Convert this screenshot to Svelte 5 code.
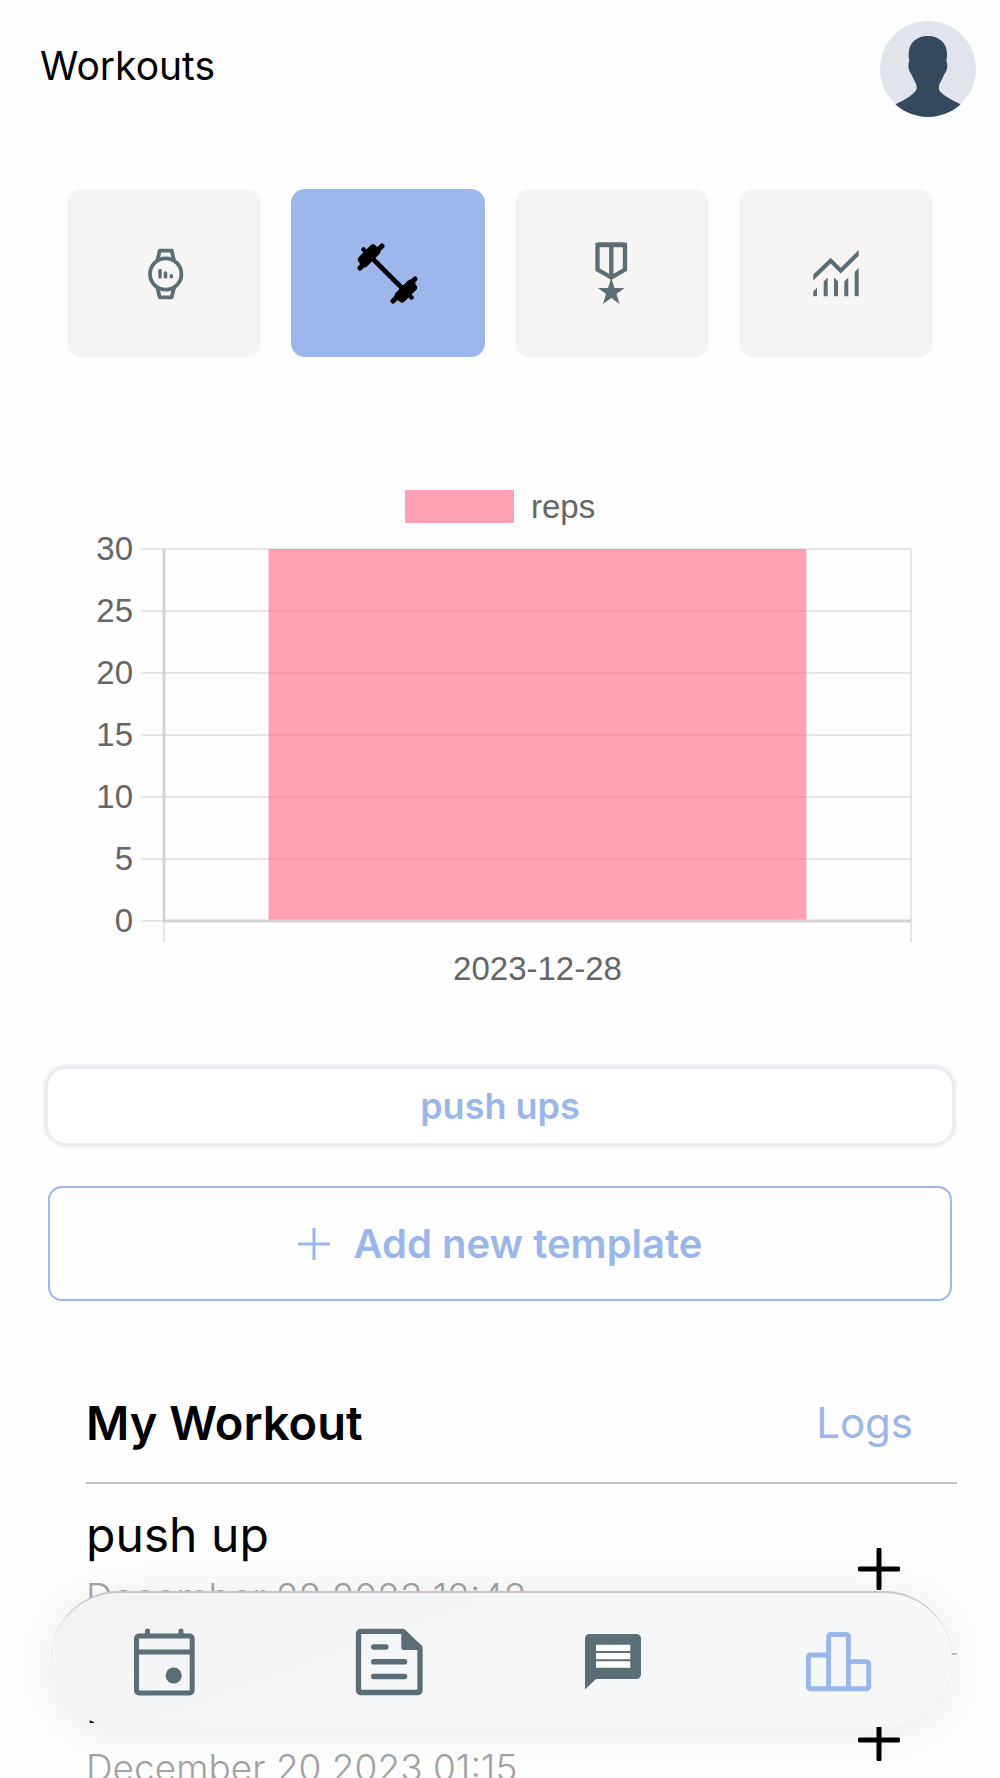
<script lang="ts">
	const tabs = ['Activity', 'Workouts', 'Awards', 'Progress'];
	let activeTab = $state('Workouts');

	const sessions = [
		{ name: 'push up', date: 'December 28 2023 12:48' },
		{ name: 'run', date: 'December 20 2023 01:15' }
	];

	const navItems = ['Calendar', 'Articles', 'Messages', 'Stats'];
	const currentNav = 'Stats';

	// Chart geometry, in viewBox units
	const bars = [{ label: '2023-12-28', reps: 30 }];
	const max = 30;
	const step = 5;
	const plot = { left: 97, right: 844, top: 69, bottom: 441 };
	const ticks = Array.from({ length: max / step + 1 }, (_, i) => i * step);
	const y = (value: number) => plot.bottom - (value / max) * (plot.bottom - plot.top);
	const slot = (plot.right - plot.left) / bars.length;
	const barWidth = slot * 0.72;
</script>

<div class="screen">
	<header class="top">
		<h1>Workouts</h1>
		<button class="avatar" aria-label="Profile">
			<svg viewBox="0 0 96 96" aria-hidden="true">
				<clipPath id="avatar-clip"><circle cx="48" cy="48" r="48" /></clipPath>
				<g clip-path="url(#avatar-clip)">
					<rect width="96" height="96" fill="#e0e5ec" />
					<path
						fill="#35495e"
						d="M47.700 15C36 15 28.700 22.500 28.700 32.500c0 3 .2 5.500.6 7.500-1.500 3-1 9 1 11.500 1.200 1.500 2 3.500 3 6 2 3.500 3.400 6 3.400 9 0 2.500-1.200 4-3.400 5.800C29 77 21 80.500 14 84v12h68V84c-7-3.500-15-7-20-11.700-2-1.800-3.200-3.300-3.200-5.800 0-3 1.700-5.500 3.600-9 1-2.500 1.800-4.500 3-6 2-2.500 2.500-8.500 1-11.500.4-2 .6-4.500.6-7.500C67 22.500 59.500 15 47.700 15z"
					/>
				</g>
			</svg>
		</button>
	</header>

	<div class="tabs">
		{#each tabs as tab}
			<button
				class="tab"
				class:active={tab === activeTab}
				aria-label={tab}
				aria-pressed={tab === activeTab}
				onclick={() => (activeTab = tab)}
			>
				<svg class="icon" viewBox="0 0 72 72" aria-hidden="true">
					{#if tab === 'Activity'}
						<g fill="none" stroke="currentColor" stroke-width="3.800" stroke-linejoin="round" stroke-linecap="round">
							<circle cx="37.700" cy="37" r="15.700" />
							<path d="M29.500 23l2.200-9.300h12l2.200 9.300M29.500 51l2.200 9.300h12l2.200-9.300" />
							<path stroke-width="3.500" d="M32 33.500v6.500M37.500 36v4M43.300 38.700v1" />
						</g>
					{:else if tab === 'Workouts'}
						<g fill="none" stroke="currentColor" stroke-linecap="round">
							<path stroke-width="4.700" d="M17 18l38 38" />
							<path stroke-width="5" d="M30 9L8 31M63 42L41 64" />
							<path stroke-width="8" d="M21 11.500L10 22.500M50 61.500l11-11" />
							<path stroke-width="9" d="M24 14L12 26M47 59l12-12" />
							<path stroke-width="4.500" d="M11.500 12.500l4 4M59.500 60.500l-4-4" />
						</g>
					{:else if tab === 'Awards'}
						<path
							fill="none"
							stroke="currentColor"
							stroke-width="4.300"
							d="M21.500 8H49v24.500l-13.700 8-13.800-8zM21.500 7.500H49M35.300 8v34"
						/>
						<path fill="currentColor" d="M35.300 41l3.200 10h10l-8 6 3 10-8.200-6L27 67l3-10-8-6h10z" />
					{:else}
						<path
							fill="currentColor"
							d="M13.300 37.500L30.700 20.700l10 10L58.700 13v5.800L40.700 36.500l-10-10-17.400 17zM13.300 54.500l3.700-3.700v8.500h-3.700zM23.700 44.500l4-4v18.800h-4zM34 40.500l4 4v14.800h-4zM44.300 44.500l4-4v18.800h-4zM54.700 35l4-4v28.300h-4z"
						/>
					{/if}
				</svg>
			</button>
		{/each}
	</div>

	<svg class="chart" viewBox="0 0 866 520" role="img" aria-label="Reps per day">
		<rect x="338" y="10" width="109" height="33" class="bar" />
		<text x="464" y="38">reps</text>

		{#each ticks as tick}
			<line x1="74" x2={plot.right} y1={y(tick)} y2={y(tick)} class="grid" />
			<text x="66" y={y(tick) + 11} text-anchor="end">{tick}</text>
		{/each}
		<line x1={plot.left} x2={plot.left} y1={plot.top} y2="462" class="grid" />
		<line x1={plot.right} x2={plot.right} y1={plot.top} y2="462" class="grid" />

		{#each bars as bar, i}
			<rect
				x={plot.left + slot * (i + 0.5) - barWidth / 2}
				y={y(bar.reps)}
				width={barWidth}
				height={plot.bottom - y(bar.reps)}
				class="bar"
			/>
			<text x={plot.left + slot * (i + 0.5)} y="500" text-anchor="middle">{bar.label}</text>
		{/each}
		<path d="M{plot.left} {plot.top}V{plot.bottom}H{plot.right}" class="axis" />
	</svg>

	<div class="actions">
		<button class="template">push ups</button>
		<button class="add">
			<svg viewBox="0 0 32 32" aria-hidden="true"><path d="M16 1v30M1 16h30" /></svg>
			Add new template
		</button>
	</div>

	<section class="workouts">
		<div class="heading">
			<h2>My Workout</h2>
			<a href="#logs">Logs</a>
		</div>
		<ul>
			{#each sessions as session}
				<li>
					<div class="session">
						<h3>{session.name}</h3>
						<p>{session.date}</p>
					</div>
					<button class="plus" aria-label="Add {session.name}">
						<svg viewBox="0 0 42 42" aria-hidden="true"><path d="M21 2v38M2 21h38" /></svg>
					</button>
				</li>
			{/each}
		</ul>
	</section>

	<nav>
		{#each navItems as item}
			<a href="#{item.toLowerCase()}" class:current={item === currentNav} aria-label={item}>
				<svg class="icon" viewBox="0 0 72 72" aria-hidden="true">
					{#if item === 'Calendar'}
						<g fill="none" stroke="currentColor" stroke-width="5">
							<rect x="8.500" y="11" width="55.700" height="57" rx="2.500" />
							<path d="M8 27h56" />
							<path stroke-linecap="round" d="M19.500 6v4M53 6v4" />
						</g>
						<circle cx="45.700" cy="50.500" r="8" fill="currentColor" />
					{:else if item === 'Articles'}
						<path
							fill="none"
							stroke="currentColor"
							stroke-width="5.300"
							stroke-linejoin="round"
							d="M7.500 6.300H50L67 23v42.500a2 2 0 0 1-2 2H7.500a2 2 0 0 1-2-2v-57a2 2 0 0 1 2-2z"
						/>
						<path fill="currentColor" d="M48.300 4.500h3L69 21v4H51a2.700 2.700 0 0 1-2.700-2.700z" />
						<path
							fill="none"
							stroke="currentColor"
							stroke-width="5.600"
							stroke-linecap="round"
							d="M20.800 22h12M20.800 36.700h30.700M20.800 51.500h30.700"
						/>
					{:else if item === 'Messages'}
						<path fill="currentColor" d="M11.500 9h47a4.500 4.500 0 0 1 4.500 4.500v36a4.500 4.500 0 0 1-4.500 4.500H18L7 64.500v-51A4.500 4.500 0 0 1 11.500 9z" />
						<path fill="#fff" d="M18 19.700h34.300V26H18zM18 28h34.300v6.300H18zM18 36.300h34.300v6.400H18z" />
					{:else}
						<path
							fill="none"
							stroke="currentColor"
							stroke-width="4.900"
							stroke-linejoin="round"
							d="M25.600 30H7.400a2 2 0 0 0-2 2v29.700a2 2 0 0 0 2 2h56.300a2 2 0 0 0 2-2V38.600a2 2 0 0 0-2-2H45.400M25.600 63.500v-52a2 2 0 0 1 2-2h15.800a2 2 0 0 1 2 2v52"
						/>
					{/if}
				</svg>
			</a>
		{/each}
	</nav>
</div>

<style>
	:global(body) {
		background: #fefefe;
	}

	.screen {
		--blue: #9bb6ec;
		--slate: #5b6d75;
		box-sizing: border-box;
		height: 100vh;
		overflow-y: auto;
		scrollbar-width: none;
		color: #000;
		font-family: Inter, sans-serif;
	}

	h1,
	h2,
	h3,
	p,
	ul {
		margin: 0;
		padding: 0;
		font-weight: 400;
	}

	button {
		padding: 0;
		border: 0;
		background: none;
		color: inherit;
		font: inherit;
		cursor: pointer;
	}

	a {
		color: inherit;
		text-decoration: none;
	}

	svg {
		display: block;
	}

	.icon {
		width: 72px;
		height: 72px;
	}

	.top {
		display: flex;
		justify-content: space-between;
		padding: 21px 24px 0 40px;
	}

	h1 {
		font-size: 39px;
		line-height: 90px;
	}

	.avatar {
		width: 96px;
		height: 96px;
	}

	.tabs {
		display: grid;
		grid-template-columns: repeat(4, 1fr);
		gap: 30px;
		padding: 72px 67px 0;
	}

	.tab {
		display: grid;
		place-items: center;
		height: 168px;
		border-radius: 14px;
		background: #f7f5f4;
		color: var(--slate);
	}

	.tab.active {
		background: #9db7ed;
		color: #000;
	}

	.chart {
		box-sizing: border-box;
		width: 100%;
		margin-top: 123px;
		padding: 0 67px;
	}

	.chart text {
		fill: #666;
		font-family: 'Liberation Sans', Arial, sans-serif;
		font-size: 33px;
	}

	.bar {
		fill: #ff6384;
		fill-opacity: 0.6;
	}

	.grid {
		stroke: #e6e6e6;
		stroke-width: 2;
	}

	.axis {
		fill: none;
		stroke: #d3d3d3;
		stroke-width: 3;
	}

	.actions {
		display: flex;
		flex-direction: column;
		gap: 43px;
		padding: 69px 48px 0;
	}

	.template,
	.add {
		color: var(--blue);
		font-weight: 600;
	}

	.template {
		height: 74px;
		border-radius: 18px;
		background: #fff;
		box-shadow:
			0 0 0 3px #ebecf1,
			0 0 0 5px #f2f3f6;
		font-size: 36px;
		line-height: 72px;
	}

	.add {
		display: flex;
		align-items: center;
		justify-content: center;
		gap: 24px;
		height: 115px;
		border: 2px solid var(--blue);
		border-radius: 14px;
		font-size: 40px;
	}

	.add svg {
		width: 32px;
		height: 32px;
		fill: none;
		stroke: currentColor;
		stroke-width: 3;
		stroke-linecap: round;
	}

	.workouts {
		padding: 84px 43px 0 86px;
	}

	.heading {
		display: flex;
		align-items: center;
		justify-content: space-between;
		padding: 6px 44px 27px 0;
		border-bottom: 2px solid #c0c0c2;
		line-height: 64px;
	}

	h2 {
		font-size: 47px;
		font-weight: 600;
	}

	.heading a {
		color: var(--blue);
		font-size: 42px;
	}

	ul {
		list-style: none;
	}

	li {
		display: flex;
		align-items: center;
		justify-content: space-between;
		height: 169px;
		padding-right: 57px;
		border-bottom: 2px solid #c0c0c2;
	}

	.session {
		align-self: flex-start;
		padding-top: 19px;
	}

	h3 {
		font-size: 48px;
		line-height: 64px;
	}

	p {
		color: #a3a3a3;
		font-size: 37px;
		font-weight: 300;
		line-height: 60px;
	}

	.plus {
		width: 42px;
		height: 42px;
	}

	.plus svg {
		fill: none;
		stroke: #000;
		stroke-width: 5;
		stroke-linecap: round;
	}

	/* Floats over the list while it scrolls underneath */
	nav {
		position: fixed;
		right: 48px;
		bottom: 51px;
		left: 51px;
		box-sizing: border-box;
		display: grid;
		grid-template-columns: repeat(4, 1fr);
		place-items: center;
		height: 136px;
		padding-top: 2px;
		border-top: 2px solid #c6c6c8;
		border-radius: 68px;
		background: linear-gradient(160deg, #f1f2f4, #f6f7f9 50%);
		box-shadow: 0 4px 48px rgba(0, 0, 0, 0.09);
		color: var(--slate);
	}

	.current {
		color: var(--blue);
	}
</style>
